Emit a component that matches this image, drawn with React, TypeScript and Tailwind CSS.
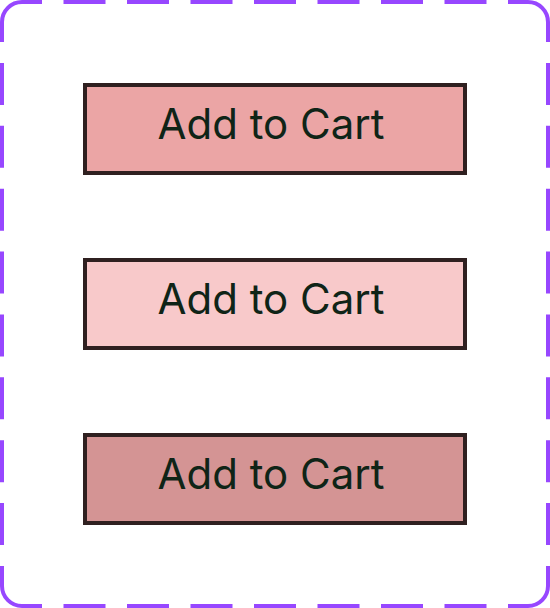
import React from "react";

function DashedFrame() {
  const W = 550;
  const H = 608;
  const s = 2; // stroke centre inset
  const r = 20;
  const d = 42;
  const gh = (W - 9 * d) / 8;
  const gv = (H - 10 * d) / 9;
  const c = "#9747FF";
  return (
    <svg
      className="pointer-events-none absolute inset-0"
      width={W}
      height={H}
      viewBox={`0 0 ${W} ${H}`}
      fill="none"
    >
      <g stroke={c} strokeWidth={4} fill="none">
        <path d={`M ${s} ${d} L ${s} ${r + s} A ${r} ${r} 0 0 1 ${r + s} ${s} L ${d} ${s}`} />
        <path d={`M ${W - d} ${s} L ${W - r - s} ${s} A ${r} ${r} 0 0 1 ${W - s} ${r + s} L ${W - s} ${d}`} />
        <path d={`M ${W - s} ${H - d} L ${W - s} ${H - r - s} A ${r} ${r} 0 0 1 ${W - r - s} ${H - s} L ${W - d} ${H - s}`} />
        <path d={`M ${d} ${H - s} L ${r + s} ${H - s} A ${r} ${r} 0 0 1 ${s} ${H - r - s} L ${s} ${H - d}`} />
        <line x1={d + gh} y1={s} x2={W - d - gh} y2={s} strokeDasharray={`${d} ${gh}`} />
        <line x1={d + gh} y1={H - s} x2={W - d - gh} y2={H - s} strokeDasharray={`${d} ${gh}`} />
        <line x1={s} y1={d + gv} x2={s} y2={H - d - gv} strokeDasharray={`${d} ${gv}`} />
        <line x1={W - s} y1={d + gv} x2={W - s} y2={H - d - gv} strokeDasharray={`${d} ${gv}`} />
      </g>
    </svg>
  );
}

function CartButton({ bg }: { bg: string }) {
  return (
    <button
      className={`flex h-[92px] w-[384px] items-center justify-center border-4 border-[#2f2020] ${bg} pb-[10px] pr-[8px] text-[42px] leading-none text-[#0f2417]`}
      style={{ fontFamily: "Inter, 'Noto Sans', sans-serif" }}
    >
      Add to Cart
    </button>
  );
}

export default function App() {
  return (
    <div className="relative flex h-[608px] w-[550px] flex-col items-center gap-[83px] bg-white py-[83px]">
      <DashedFrame />
      <CartButton bg="bg-[#eba5a5]" />
      <CartButton bg="bg-[#f8c9ca]" />
      <CartButton bg="bg-[#d49494]" />
    </div>
  );
}
